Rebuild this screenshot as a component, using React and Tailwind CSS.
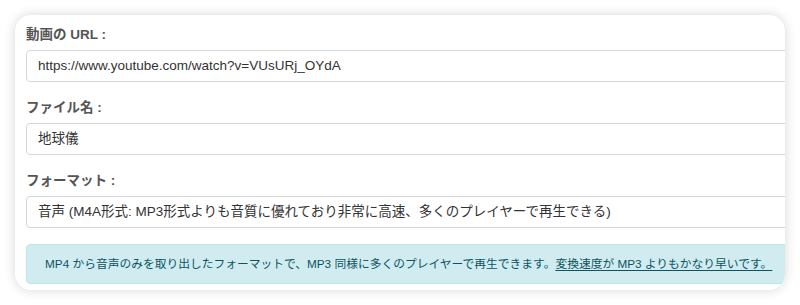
const fields = [
  { label: "動画の URL :", value: "https://www.youtube.com/watch?v=VUsURj_OYdA" },
  { label: "ファイル名 :", value: "地球儀" },
  {
    label: "フォーマット :",
    value:
      "音声 (M4A形式: MP3形式よりも音質に優れており非常に高速、多くのプレイヤーで再生できる)",
  },
];

const App = () => {
  return (
    <div className="min-h-screen bg-white p-[15px] font-['Liberation_Sans','Noto_Sans_CJK_JP',sans-serif]">
      <div className="w-[770px] h-[275px] overflow-hidden rounded-2xl bg-white shadow-[0_0_12px_rgba(0,0,0,0.16)] pt-[10px] pl-[11px]">
        <div className="w-[820px]">
          {fields.map((field, index) => (
            <div key={index} className="mb-[16px] last:mb-[13px]">
              <div className="h-[20px] leading-[20px] mb-[5px] text-[13.5px] font-bold text-[#555]">
                {field.label}
              </div>
              <div className="h-[32px] rounded-[4px] border border-[#d3d7dd] bg-white pl-[11px] flex items-center text-[13.5px] text-[#333]">
                {field.value}
              </div>
            </div>
          ))}

          <div className="h-[40px] rounded-[4px] border border-[#bee5eb] bg-[#d1ecf1] pl-[18px] flex items-center text-[11.75px] text-[#0c5460]">
            <span>
              MP4 から音声のみを取り出したフォーマットで、MP3 同様に多くのプレイヤーで再生できます。
              <span className="underline underline-offset-2">変換速度が MP3 よりもかなり早いです。</span>
            </span>
          </div>
        </div>
      </div>
    </div>
  );
};

export default App;
